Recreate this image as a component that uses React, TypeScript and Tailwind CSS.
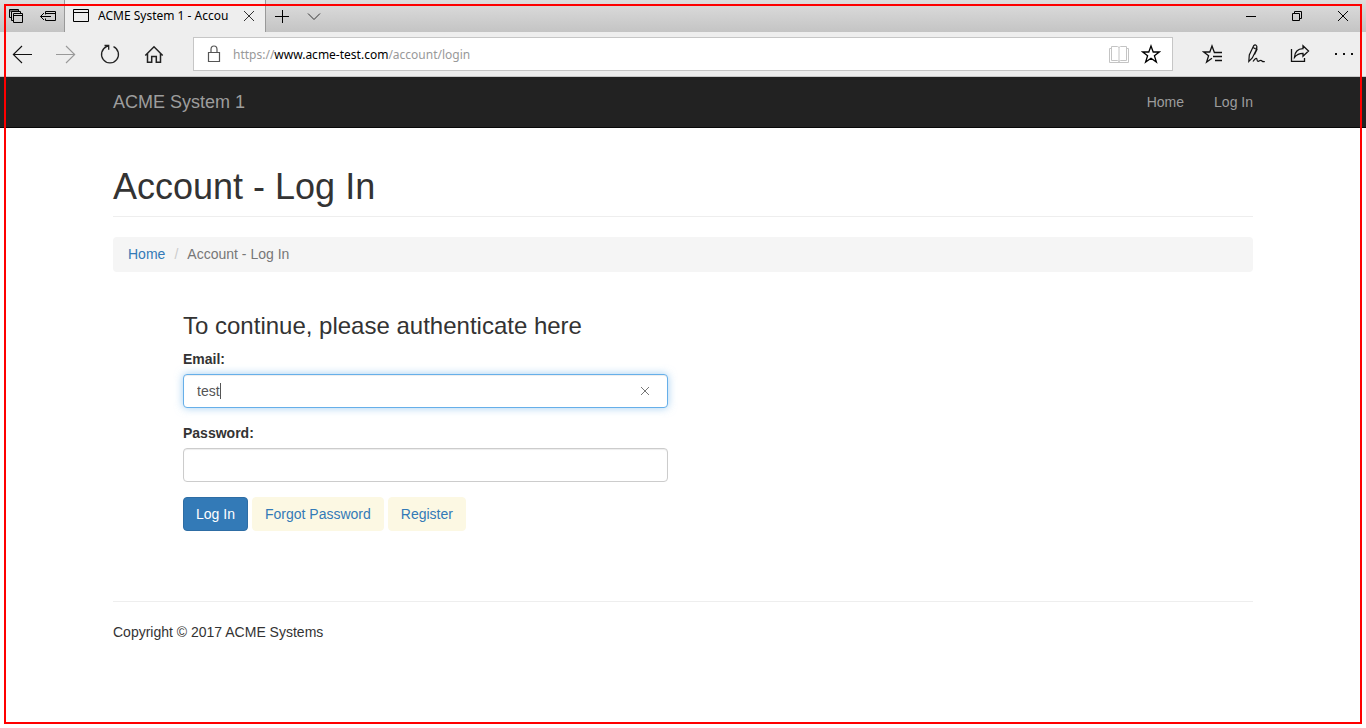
import type { ReactNode } from "react";

function Icon({ size = 20, width = 1, children }: { size?: number; width?: number; children: ReactNode }) {
  return (
    <svg width={size} height={size} viewBox={`0 0 ${size} ${size}`} fill="none" stroke="currentColor" strokeWidth={width} aria-hidden="true">
      {children}
    </svg>
  );
}

function IconButton({ label, className, children }: { label: string; className: string; children: ReactNode }) {
  return (
    <button type="button" aria-label={label} className={`flex h-full shrink-0 items-center justify-center ${className}`}>
      {children}
    </button>
  );
}

function TabStrip() {
  return (
    <div className="flex h-8 items-stretch bg-linear-to-b from-[#dedede] to-[#c4c4c4] text-black">
      <IconButton label="Tabs you've set aside" className="w-8">
        <Icon size={16}>
          <path d="M3 9.5H1.5V1.5H10.5V3M1.5 3H10.5M5 12.5H3.5V3.5H12.5V5.5" />
          <path d="M5.5 5.5H14.5V14.5H5.5ZM5.5 7.5H14.5" />
        </Icon>
      </IconButton>
      <IconButton label="Set these tabs aside" className="w-8">
        <Icon size={16}>
          <path d="M5.5 6.5V3.5H15.5V12.5H5.5V10.5M5.5 5.5H15.5M0.5 8.5H11M4 5L0.5 8.5L4 12" />
        </Icon>
      </IconButton>
      <div className="flex w-[202px] shrink-0 items-center border-x border-[#999] bg-[#eee] pl-2">
        <svg width="16" height="14" viewBox="0 0 16 14" fill="none" stroke="currentColor" aria-hidden="true" className="shrink-0">
          <path d="M0.5 0.5H15.5V12.5H0.5ZM0.5 3.5H15.5" />
        </svg>
        <span className="ml-[9px] w-[135px] overflow-hidden text-[12px] leading-5 whitespace-nowrap">ACME System 1 - Accou</span>
        <IconButton label="Close tab" className="w-8 text-[#333]">
          <Icon size={12}>
            <path d="M1 1L11 11M11 1L1 11" />
          </Icon>
        </IconButton>
      </div>
      <IconButton label="New tab" className="w-8">
        <Icon size={16}>
          <path d="M1 8.5H15M8.5 2V15" />
        </Icon>
      </IconButton>
      <IconButton label="Show tab previews" className="w-8 text-[#333]">
        <Icon size={16}>
          <path d="M2 5.5L8 11.5L14 5.5" />
        </Icon>
      </IconButton>
      <div className="flex-1" />
      <IconButton label="Minimize" className="w-[46px]">
        <Icon size={12}>
          <path d="M1 6.5H11" />
        </Icon>
      </IconButton>
      <IconButton label="Restore" className="w-[46px]">
        <Icon size={12}>
          <path d="M1.5 3.5H8.5V10.5H1.5ZM3.5 3.5V1.5H10.5V8.5H8.5" />
        </Icon>
      </IconButton>
      <IconButton label="Close" className="w-[46px]">
        <Icon size={12}>
          <path d="M1 1L11 11M11 1L1 11" />
        </Icon>
      </IconButton>
    </div>
  );
}

function Toolbar() {
  return (
    <div className="flex h-[45px] items-stretch border-b border-[#c8c8c8] bg-[#eee] text-[#111]">
      <IconButton label="Back" className="w-11">
        <Icon>
          <path strokeWidth="1.1" d="M1 10.5H20M10 2L1.3 10.5L10 19" />
        </Icon>
      </IconButton>
      <IconButton label="Forward" className="w-11 text-[#999]">
        <Icon>
          <path strokeWidth="1.1" d="M0 10.5H19M10 2L18.7 10.5L10 19" />
        </Icon>
      </IconButton>
      <IconButton label="Refresh" className="w-11 text-[#222]">
        <Icon width={1.3}>
          <path d="M13.5 2.7A8.5 8.5 0 1 1 6.5 2.7L8.5 1.9M4.5 1.5H8.7V5.7" />
        </Icon>
      </IconButton>
      <IconButton label="Home" className="w-11 text-[#222]">
        <Icon width={1.5}>
          <path d="M1.3 11.5L10 2.7L18.7 11.5M3.5 9.5V18.3H7.7V12.5H12.3V18.3H16.5V9.5" />
        </Icon>
      </IconButton>
      <div className="mx-[17px] my-[5px] flex min-w-0 flex-1 items-center border border-[#c6c6c6] bg-white pr-[5px] pl-[13px]">
        <svg width="14" height="18" viewBox="0 0 14 18" fill="none" stroke="#555" aria-hidden="true" className="shrink-0">
          <path strokeWidth="1.2" d="M1.5 7.5H12.5V16.5H1.5ZM4 7.5V4.5A3 3.5 0 0 1 10 4.5V7.5" />
        </svg>
        <div role="textbox" aria-label="Address" className="ml-3 min-w-0 flex-1 truncate pt-px text-[12px] leading-5 text-[#999]">
          https://<span className="text-black">www.acme-test.com</span>/account/login
        </div>
        <IconButton label="Reading view" className="w-8 text-[#c4c4c4]">
          <Icon>
            <path d="M2.5 2.5H8.5L10 3.5L11.5 2.5H17.5V16.5H11.5L10 17.5L8.5 16.5H2.5ZM10 3.5V17.5M2.5 4.5H0.5V18.5H19.5V4.5H17.5" />
          </Icon>
        </IconButton>
        <IconButton label="Add to favorites" className="w-8 text-black">
          <Icon width={1.3}>
            <path d="M10 2L12.2 8H18.3L13.4 11.7L15.4 18L10 14.2L4.6 18L6.6 11.7L1.7 8H7.8Z" />
          </Icon>
        </IconButton>
      </div>
      <IconButton label="Favorites hub" className="w-11">
        <Icon width={1.3}>
          <path d="M20 8.5H12.4L10 2L7.8 8H1.7L6.6 11.7L4.6 18L10 14.2M11 12.5H20M13 16.5H20" />
        </Icon>
      </IconButton>
      <IconButton label="Add notes" className="w-11">
        <Icon width={1.2}>
          <path d="M2.8 17.5L3.3 11L7.5 2Q9.3 -0.2 10.8 2.2Q11.2 4 10.2 6L6.3 14ZM7 3.5L9.8 5M10.3 3L11 5.5L8.5 10.5M7 17.5Q10.5 12.5 11 15.5Q11.3 18.5 13.5 16.8Q15 15.8 16 17Q17 18 18.8 17.5" />
        </Icon>
      </IconButton>
      <IconButton label="Share" className="w-11">
        <Icon width={1.3}>
          <path d="M1.5 5V17.3H14.5V14M13 1.8L18.5 7L13 12.2V9.3Q7.5 9.3 4.5 13.3Q5 5 13 4.7Z" />
        </Icon>
      </IconButton>
      <IconButton label="More" className="w-11">
        <Icon>
          <path strokeWidth="2" d="M1 10H3M9 10H11M17 10H19" />
        </Icon>
      </IconButton>
    </div>
  );
}

export default function App() {
  return (
    <div className="min-h-screen bg-white font-['Liberation_Sans',Arial,sans-serif] text-[14px] leading-5 text-[#333]">
      <div className="font-['Noto_Sans','Open_Sans',sans-serif]">
        <TabStrip />
        <Toolbar />
      </div>

      <nav className="border-b border-[#080808] bg-[#222] text-[#9d9d9d]">
        <div className="mx-auto flex h-[50px] max-w-[1140px] items-center justify-between">
          <a href="#" className="text-[18px]">ACME System 1</a>
          <div className="flex gap-[30px]">
            <a href="#">Home</a>
            <a href="#">Log In</a>
          </div>
        </div>
      </nav>

      <div className="mx-auto max-w-[1140px] pt-[39px]">
        <h1 className="border-b border-[#eee] pb-[9px] text-[36px] leading-10 font-normal">Account - Log In</h1>

        <ol className="mt-5 flex rounded bg-[#f5f5f5] px-[15px] pt-[7px] pb-2">
          <li>
            <a href="#" className="text-[#337ab7]">Home</a>
          </li>
          <li aria-hidden="true" className="w-[22px] text-center text-[#ccc]">/</li>
          <li className="text-[#777]">Account - Log In</li>
        </ol>

        <form className="mt-[41px] ml-[70px] max-w-[485px]" onSubmit={(e) => e.preventDefault()}>
          <h3 className="mb-[10px] text-[24px] leading-[26px] font-normal">To continue, please authenticate here</h3>
          <label htmlFor="email" className="mb-[5px] block font-bold">Email:</label>
          <div className="relative mb-[15px]">
            <input
              id="email"
              type="text"
              defaultValue="test"
              className="block h-[34px] w-full rounded border border-[#66afe9] bg-white px-[13px] text-[#555] caret-transparent shadow-[inset_0_1px_1px_rgba(0,0,0,0.075),0_0_8px_rgba(102,175,233,0.6)] outline-none"
            />
            <span className="absolute top-[9px] left-[37px] h-4 w-px bg-[#555]" />
            <button type="button" aria-label="Clear" className="absolute top-0 right-3 flex h-[34px] w-[22px] items-center justify-center text-[#777]">
              <Icon size={10}>
                <path d="M1 1L9 9M9 1L1 9" />
              </Icon>
            </button>
          </div>
          <label htmlFor="password" className="mb-[5px] block font-bold">Password:</label>
          <input
            id="password"
            type="password"
            className="mb-[15px] block h-[34px] w-full rounded border border-[#ccc] bg-white px-[13px] text-[#555] shadow-[inset_0_1px_1px_rgba(0,0,0,0.075)] outline-none"
          />
          <div className="flex gap-1">
            <button type="submit" className="rounded border border-[#2e6da4] bg-[#337ab7] px-3 py-1.5 text-white">Log In</button>
            <a href="#" className="rounded border border-[#fcf8e3] bg-[#fcf8e3] px-3 py-1.5 text-[#337ab7]">Forgot Password</a>
            <a href="#" className="rounded border border-[#fcf8e3] bg-[#fcf8e3] px-3 py-1.5 text-[#337ab7]">Register</a>
          </div>
        </form>

        <footer className="mt-[70px] border-t border-[#eee] pt-5">
          <p>Copyright © 2017 ACME Systems</p>
        </footer>
      </div>

      <div className="pointer-events-none fixed inset-1 border-2 border-[#f00]" />
    </div>
  );
}
